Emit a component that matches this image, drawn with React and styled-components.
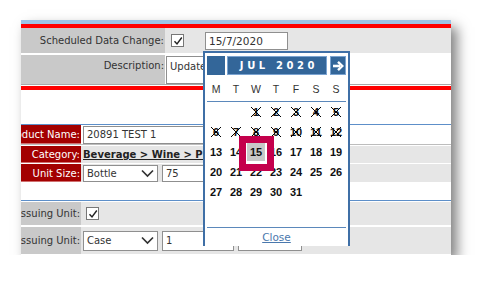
import React from "react";
import styled, { createGlobalStyle } from "styled-components";

const GlobalStyle = createGlobalStyle`
  body {
    margin: 0;
    background: #fff;
    font-family: "DejaVu Sans", Verdana, sans-serif;
  }
`;

const Page = styled.div`
  padding: 20px 0 0 21px;
`;

const Card = styled.div`
  position: relative;
  width: 430px;
  height: 235px;
  overflow: hidden;
  background: #fff;
  box-shadow: 6px 7px 12px rgba(0, 0, 0, 0.5);
`;

const Bar = styled.div`
  height: ${(props) => props.h}px;
  background: ${(props) => props.color};
  margin-top: ${(props) => props.mt || 0}px;
`;

const Row = styled.div`
  display: grid;
  grid-template-columns: ${(props) => props.labelW}px 1fr;
  height: ${(props) => props.h}px;
  margin-top: ${(props) => props.mt || 0}px;
  border-bottom: ${(props) => (props.line ? `1px solid ${props.line}` : "none")};
`;

const Label = styled.div`
  display: flex;
  justify-content: flex-end;
  align-items: ${(props) => (props.top ? "flex-start" : "center")};
  padding: ${(props) => (props.top ? "5px 1px 0 0" : "0 1px 0 0")};
  overflow: hidden;
  white-space: nowrap;
  font-size: 10px;
  background: ${(props) => (props.dark ? "#a30000" : "#c9c9c9")};
  color: ${(props) => (props.dark ? "#fff" : "#333")};
  box-shadow: ${(props) =>
    props.dark ? "inset 0 -1px 0 #d07070" : "none"};
`;

const Value = styled.div`
  display: flex;
  align-items: ${(props) => (props.top ? "flex-start" : "center")};
  gap: ${(props) => props.gap || 4}px;
  padding-left: ${(props) => props.pl || 2}px;
  padding-top: ${(props) => props.pt || 0}px;
  background: ${(props) => props.bg || "#e6e6e6"};
  overflow: hidden;
`;

const Field = styled.div`
  box-sizing: border-box;
  display: flex;
  align-items: ${(props) => (props.top ? "flex-start" : "center")};
  justify-content: space-between;
  flex-shrink: 0;
  width: ${(props) => props.w}px;
  height: ${(props) => props.h || 17}px;
  padding: ${(props) => (props.top ? "4px 3px" : "0 3px")};
  background: #fff;
  border: 1px solid #8f8f8f;
  font-size: ${(props) => props.fs || 10}px;
  color: #333;
  white-space: nowrap;
  overflow: hidden;
`;

const Box = styled.span`
  box-sizing: border-box;
  display: flex;
  align-items: center;
  justify-content: center;
  width: 13px;
  height: 13px;
  flex-shrink: 0;
  background: #fff;
  border: 1px solid #777;
`;

const Crumb = styled.span`
  font-weight: bold;
  font-size: 10px;
  color: #222;
  text-decoration: underline;
  white-space: nowrap;
`;

const Calendar = styled.div`
  position: absolute;
  left: 182px;
  top: 31px;
  box-sizing: border-box;
  width: 147px;
  height: 195px;
  padding: 3px 2px 0;
  background: #fff;
  border: 2px solid #3f6fa6;
  border-bottom: none;
  font-family: "Liberation Sans", Arial, sans-serif;
`;

const Head = styled.div`
  display: flex;
  height: 19px;
`;

const HeadCell = styled.div`
  box-sizing: border-box;
  display: flex;
  align-items: center;
  justify-content: center;
  width: ${(props) => props.w}px;
  margin-left: ${(props) => props.ml || 0}px;
  background: #336699;
  border: 1px solid ${(props) => (props.edge ? "#7aa3d1" : "#336699")};
  color: #fff;
  font-family: "DejaVu Sans", Verdana, sans-serif;
  font-weight: bold;
  font-size: 10px;
  letter-spacing: 3.6px;
  padding-left: 4px;
`;

const Week = styled.div`
  display: grid;
  grid-template-columns: repeat(7, 20px);
  margin: 5px 0 0 -1px;
  height: 18px;
  align-items: center;
  justify-items: center;
  font-size: 10.5px;
  color: #333;
`;

const Rule = styled.div`
  height: 1px;
  background: #5b88bb;
  margin-top: ${(props) => props.mt}px;
`;

const Days = styled.div`
  display: grid;
  grid-template-columns: repeat(7, 20px);
  grid-auto-rows: 20px;
  margin-left: -1px;
`;

const Day = styled.div`
  position: relative;
  display: flex;
  align-items: center;
  justify-content: center;
  font-size: 11px;
  font-weight: bold;
  color: #111;
  grid-column: ${(props) => props.col || "auto"};
  background: ${(props) => (props.picked ? "#c8c8c8" : "transparent")};
  box-shadow: ${(props) => (props.picked ? "inset 0 0 0 1px #fff" : "none")};
`;

const Cross = styled.svg`
  position: absolute;
  left: 4px;
  top: 4px;
`;

const CloseLink = styled.div`
  height: 17px;
  display: flex;
  align-items: center;
  justify-content: center;
  font-family: "DejaVu Sans", Verdana, sans-serif;
  font-size: 10.5px;
  color: #4a78ad;
  text-decoration: underline;
`;

const Callout = styled.div`
  position: absolute;
  left: 34px;
  top: 83px;
  box-sizing: border-box;
  width: 35px;
  height: 35px;
  border: 7px solid #c4004c;
`;

const Check = () => (
  <svg width="10" height="10" viewBox="0 0 10 10">
    <path d="M1.5 5.2 L4 8 L8.8 1.5" fill="none" stroke="#222" strokeWidth="1.4" />
  </svg>
);

const Chevron = () => (
  <svg width="13" height="9" viewBox="0 0 13 9">
    <path d="M1 1.5 L6.5 7 L12 1.5" fill="none" stroke="#333" strokeWidth="1.7" />
  </svg>
);

const Arrow = () => (
  <svg width="12" height="12" viewBox="0 0 12 12">
    <path d="M1 6 H8" stroke="#fff" strokeWidth="2.6" />
    <path d="M6 1.8 L10.3 6 L6 10.2" fill="none" stroke="#fff" strokeWidth="2.4" />
  </svg>
);

const weekdays = ["M", "T", "W", "T", "F", "S", "S"];

const App = () => {
  const days = [];
  for (let d = 1; d <= 31; d++) days.push(d);

  return (
    <Page>
      <GlobalStyle />
      <Card>
        <Bar h={4} color="#9ec4e6" />
        <Bar h={4} color="#ff0000" />
        <Row labelW={144} h={25}>
          <Label>Scheduled Data Change:</Label>
          <Value pl={6} gap={21}>
            <Box>
              <Check />
            </Box>
            <Field w={83} h={18} fs={10.5}>
              15/7/2020
            </Field>
          </Value>
        </Row>
        <Row labelW={144} h={29} mt={2} line="#a9a9a9">
          <Label top>Description:</Label>
          <Value bg="#fff" pl={1} pt={1} top>
            <Field w={180} h={28} top>
              Update
            </Field>
          </Value>
        </Row>
        <Bar h={4} color="#ff0000" mt={1} />
        <Bar h={1} color="#5d8fc9" mt={34} />
        <Row labelW={60} h={19} line="#bdbdbd">
          <Label dark>Product Name:</Label>
          <Value bg="#fff">
            <Field w={140} h={18}>
              20891 TEST 1
            </Field>
          </Value>
        </Row>
        <Row labelW={60} h={17} mt={1}>
          <Label dark>Category:</Label>
          <Value>
            <Crumb>Beverage &gt; Wine &gt; Premium Red</Crumb>
          </Value>
        </Row>
        <Row labelW={60} h={18} mt={1}>
          <Label dark>Unit Size:</Label>
          <Value>
            <Field w={75} h={17}>
              Bottle
              <Chevron />
            </Field>
            <Field w={80} h={17}>
              75
            </Field>
          </Value>
        </Row>
        <Bar h={1} color="#5d8fc9" mt={18} />
        <Row labelW={60} h={23} mt={1}>
          <Label>Issuing Unit:</Label>
          <Value pl={5}>
            <Box>
              <Check />
            </Box>
          </Value>
        </Row>
        <Row labelW={60} h={27} mt={2}>
          <Label>Issuing Unit:</Label>
          <Value>
            <Field w={75} h={20}>
              Case
              <Chevron />
            </Field>
            <Field w={72} h={20}>
              1
            </Field>
            <Field w={64} h={20} />
          </Value>
        </Row>

        <Calendar>
          <Head>
            <HeadCell w={18} />
            <HeadCell w={100} ml={2} edge>
              JUL 2020
            </HeadCell>
            <HeadCell w={16} ml={3} edge style={{ paddingLeft: 0 }}>
              <Arrow />
            </HeadCell>
          </Head>
          <Week>
            {weekdays.map((w, i) => (
              <span key={i}>{w}</span>
            ))}
          </Week>
          <Rule mt={3} />
          <Days>
            {days.map((d) => (
              <Day key={d} col={d === 1 ? 3 : undefined} picked={d === 15}>
                {d}
                {d <= 12 && (
                  <Cross width="12" height="12" viewBox="0 0 12 12">
                    <path d="M1 1 L11 11 M11 1 L1 11" stroke="#000" strokeWidth="1" />
                  </Cross>
                )}
              </Day>
            ))}
          </Days>
          <Rule mt={25} />
          <CloseLink>Close</CloseLink>
          <Callout />
        </Calendar>
      </Card>
    </Page>
  );
};

export default App;
